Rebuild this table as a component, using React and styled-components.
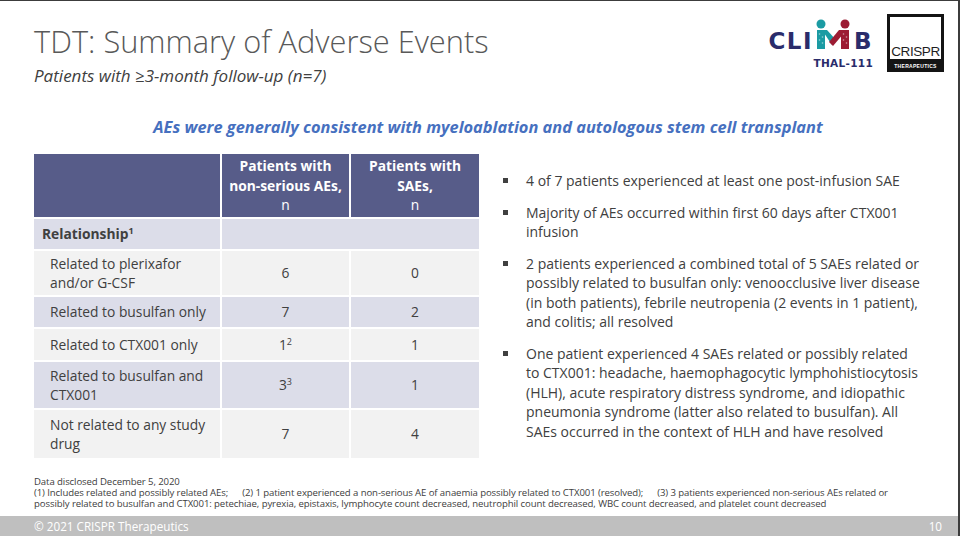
import React from 'react';
import styled, { createGlobalStyle } from 'styled-components';

const GlobalStyle = createGlobalStyle`
  html, body {
    margin: 0;
    padding: 0;
    background: #ffffff;
  }
  body {
    font-family: "Open Sans", "Liberation Sans", sans-serif;
    color: #404040;
  }
`;

const Slide = styled.div`
  width: 960px;
  height: 536px;
  box-sizing: border-box;
  border-top: 1px solid #3c3c3c;
  border-right: 2px solid #3c3c3c;
  display: flex;
  flex-direction: column;
  background: #fff;
  overflow: hidden;
`;

const Header = styled.header`
  display: flex;
  justify-content: space-between;
  align-items: flex-start;
  padding: 0 14px 0 34px;
`;

const TitleBlock = styled.div`
  padding-top: 22px;
`;

const Title = styled.h1`
  margin: 0;
  font-family: "Open Sans", sans-serif;
  font-weight: 300;
  font-size: 30.8px;
  line-height: 36px;
  color: #595959;
  white-space: nowrap;
`;

const Subtitle = styled.div`
  margin-top: 6px;
  font-style: italic;
  font-size: 17px;
  line-height: 22px;
  color: #404040;
  white-space: nowrap;
`;

const Logos = styled.div`
  display: flex;
  align-items: center;
  gap: 14px;
  padding-top: 13px;
`;

const ClimbLogo = styled.div`
  display: flex;
  flex-direction: column;
  align-items: flex-end;
`;

const ClimbWord = styled.div`
  display: flex;
  align-items: flex-end;
  font-family: "DejaVu Sans", sans-serif;
  font-weight: 700;
  font-size: 23px;
  line-height: 17px;
  letter-spacing: 1.5px;
  color: #2a2c6b;
`;

const Thal = styled.div`
  margin-top: 8px;
  font-family: "DejaVu Sans", sans-serif;
  font-weight: 700;
  font-size: 10.5px;
  line-height: 10px;
  letter-spacing: 0.3px;
  color: #2a2c6b;
`;

const CrisprBox = styled.div`
  width: 57px;
  height: 58px;
  box-sizing: border-box;
  background: #141414;
  padding: 3px 3px 0 3px;
  display: flex;
  flex-direction: column;
`;

const CrisprInner = styled.div`
  flex: 1;
  background: #fff;
  display: flex;
  align-items: flex-end;
  justify-content: center;
  font-family: "Liberation Sans", sans-serif;
  font-size: 13.5px;
  line-height: 12px;
  letter-spacing: -0.4px;
  color: #1e1e1e;
  padding-bottom: 1px;
  white-space: nowrap;
`;

const CrisprBand = styled.div`
  height: 13px;
  display: flex;
  align-items: center;
  justify-content: center;
  font-family: "Liberation Sans", sans-serif;
  font-weight: 700;
  font-size: 5px;
  letter-spacing: 0.3px;
  color: #fff;
`;

const Headline = styled.div`
  margin-top: 29px;
  text-align: center;
  font-weight: 700;
  font-style: italic;
  font-size: 16.4px;
  line-height: 22px;
  color: #4670bf;
  padding-left: 18px;
  white-space: nowrap;
`;

const Body = styled.main`
  display: flex;
  align-items: flex-start;
  margin-top: 14px;
`;

const DataTable = styled.table`
  margin-left: 32px;
  border-collapse: separate;
  border-spacing: 2px;
  table-layout: fixed;
  font-size: 13.8px;
  line-height: 19.5px;
  color: #404040;
`;

const HeadCell = styled.th`
  background: #575c89;
  color: #fff;
  font-weight: 700;
  text-align: center;
  vertical-align: middle;
  height: 63px;
  padding: 0;
  box-sizing: border-box;
  white-space: nowrap;
`;

const LightN = styled.span`
  font-weight: 400;
`;

const Row = styled.tr`
  background: ${p => (p.$shade ? '#dcdde9' : '#f2f2f2')};
  height: ${p => p.$h}px;
`;

const LabelCell = styled.td`
  padding: 0 4px 0 16px;
  vertical-align: middle;
`;

const GroupCell = styled.td`
  padding: 0 6px 0 8px;
  font-weight: 700;
  vertical-align: middle;
`;

const ValueCell = styled.td`
  text-align: center;
  vertical-align: middle;
  padding: 0;
`;

const Sup = styled.sup`
  font-size: 9px;
  line-height: 0;
  vertical-align: 5px;
  font-weight: ${p => (p.$bold ? 700 : 400)};
`;

const Bullets = styled.ul`
  list-style: none;
  margin: 19px 0 0 22px;
  padding: 0;
  display: flex;
  flex-direction: column;
  gap: 12px;
  font-size: 14px;
  line-height: 19.5px;
  color: #404040;
`;

const BulletItem = styled.li`
  display: flex;
  align-items: flex-start;
`;

const Marker = styled.span`
  flex: 0 0 23px;
  height: 19.5px;
  display: flex;
  align-items: center;
  &::before {
    content: '';
    width: 5px;
    height: 5px;
    background: #404040;
  }
`;

const Line = styled.span`
  display: block;
  white-space: nowrap;
`;

const Footnotes = styled.div`
  margin-top: auto;
  padding: 0 0 7px 34px;
  font-family: "Open Sans", sans-serif;
  font-size: 9.6px;
  line-height: 11px;
  letter-spacing: -0.1px;
  color: #404040;
  white-space: nowrap;
`;

const Gap = styled.span`
  display: inline-block;
  width: 14px;
`;

const FooterBar = styled.footer`
  height: 20px;
  flex: 0 0 20px;
  background: #bfbfbf;
  display: flex;
  align-items: center;
  justify-content: space-between;
  padding: 0 16px 0 34px;
  font-size: 11.7px;
  color: #fff;
`;

function ClimbM() {
  return (
    <svg width="38" height="31" viewBox="0 0 38 31" style={{ margin: '0 2px 0 1px', display: 'block' }}>
      <circle cx="7" cy="5" r="4.5" fill="#1b9ba3" />
      <rect x="3" y="11" width="8" height="19" fill="#1b9ba3" />
      <polygon points="8,11 13,11 22,21 18,26" fill="#1b9ba3" />
      <circle cx="31" cy="5" r="4.5" fill="#9c1c33" />
      <rect x="27" y="11" width="8" height="19" fill="#9c1c33" />
      <polygon points="25,11 30,11 30,14 19,27 15,23" fill="#9c1c33" />
      <g fill="#ffffff" opacity="0.55">
        <circle cx="5.5" cy="15" r="0.8" />
        <circle cx="8.5" cy="18" r="0.8" />
        <circle cx="5.5" cy="21" r="0.8" />
        <circle cx="8.5" cy="24" r="0.8" />
        <circle cx="29.5" cy="15" r="0.8" />
        <circle cx="32.5" cy="18" r="0.8" />
        <circle cx="29.5" cy="21" r="0.8" />
        <circle cx="32.5" cy="24" r="0.8" />
      </g>
    </svg>
  );
}

const rows = [
  { label: ['Related to plerixafor', 'and/or G-CSF'], a: '6', b: '0', h: 44 },
  { label: ['Related to busulfan only'], a: '7', b: '2', h: 30, shade: true },
  { label: ['Related to CTX001 only'], a: '1', aSup: '2', b: '1', h: 31 },
  { label: ['Related to busulfan and', 'CTX001'], a: '3', aSup: '3', b: '1', h: 46, shade: true },
  { label: ['Not related to any study', 'drug'], a: '7', b: '4', h: 48 },
];

const bullets = [
  ['4 of 7 patients experienced at least one post-infusion SAE'],
  ['Majority of AEs occurred within first 60 days after CTX001', 'infusion'],
  [
    '2 patients experienced a combined total of 5 SAEs related or',
    'possibly related to busulfan only: venoocclusive liver disease',
    '(in both patients), febrile neutropenia (2 events in 1 patient),',
    'and colitis; all resolved',
  ],
  [
    'One patient experienced 4 SAEs related or possibly related',
    'to CTX001: headache, haemophagocytic lymphohistiocytosis',
    '(HLH), acute respiratory distress syndrome, and idiopathic',
    'pneumonia syndrome (latter also related to busulfan). All',
    'SAEs occurred in the context of HLH and have resolved',
  ],
];

export default function App() {
  return (
    <>
      <GlobalStyle />
      <Slide>
        <Header>
          <TitleBlock>
            <Title>TDT: Summary of Adverse Events</Title>
            <Subtitle>Patients with ≥3-month follow-up (n=7)</Subtitle>
          </TitleBlock>
          <Logos>
            <ClimbLogo>
              <ClimbWord>
                <span>CLI</span>
                <ClimbM />
                <span>B</span>
              </ClimbWord>
              <Thal>THAL-111</Thal>
            </ClimbLogo>
            <CrisprBox>
              <CrisprInner>CRISPR</CrisprInner>
              <CrisprBand>THERAPEUTICS</CrisprBand>
            </CrisprBox>
          </Logos>
        </Header>

        <Headline>AEs were generally consistent with myeloablation and autologous stem cell transplant</Headline>

        <Body>
          <DataTable>
            <colgroup>
              <col style={{ width: 186 }} />
              <col style={{ width: 127 }} />
              <col style={{ width: 128 }} />
            </colgroup>
            <thead>
              <tr>
                <HeadCell />
                <HeadCell>
                  Patients with<br />non-serious AEs,<br /><LightN>n</LightN>
                </HeadCell>
                <HeadCell>
                  Patients with<br />SAEs,<br /><LightN>n</LightN>
                </HeadCell>
              </tr>
            </thead>
            <tbody>
              <Row $shade $h={30}>
                <GroupCell>
                  Relationship<Sup $bold>1</Sup>
                </GroupCell>
                <ValueCell colSpan={2} />
              </Row>
              {rows.map(r => (
                <Row key={r.label.join(' ')} $shade={r.shade} $h={r.h}>
                  <LabelCell>
                    {r.label.map(l => (
                      <Line key={l}>{l}</Line>
                    ))}
                  </LabelCell>
                  <ValueCell>
                    {r.a}
                    {r.aSup && <Sup>{r.aSup}</Sup>}
                  </ValueCell>
                  <ValueCell>{r.b}</ValueCell>
                </Row>
              ))}
            </tbody>
          </DataTable>

          <Bullets>
            {bullets.map(lines => (
              <BulletItem key={lines[0]}>
                <Marker />
                <div>
                  {lines.map(l => (
                    <Line key={l}>{l}</Line>
                  ))}
                </div>
              </BulletItem>
            ))}
          </Bullets>
        </Body>

        <Footnotes>
          <div>Data disclosed December 5, 2020</div>
          <div>
            (1) Includes related and possibly related AEs;<Gap />(2) 1 patient experienced a non-serious AE of anaemia possibly related to CTX001 (resolved);<Gap />(3) 3 patients experienced non-serious AEs related or
          </div>
          <div>
            possibly related to busulfan and CTX001: petechiae, pyrexia, epistaxis, lymphocyte count decreased, neutrophil count decreased, WBC count decreased, and platelet count decreased
          </div>
        </Footnotes>

        <FooterBar>
          <span>© 2021 CRISPR Therapeutics</span>
          <span>10</span>
        </FooterBar>
      </Slide>
    </>
  );
}
